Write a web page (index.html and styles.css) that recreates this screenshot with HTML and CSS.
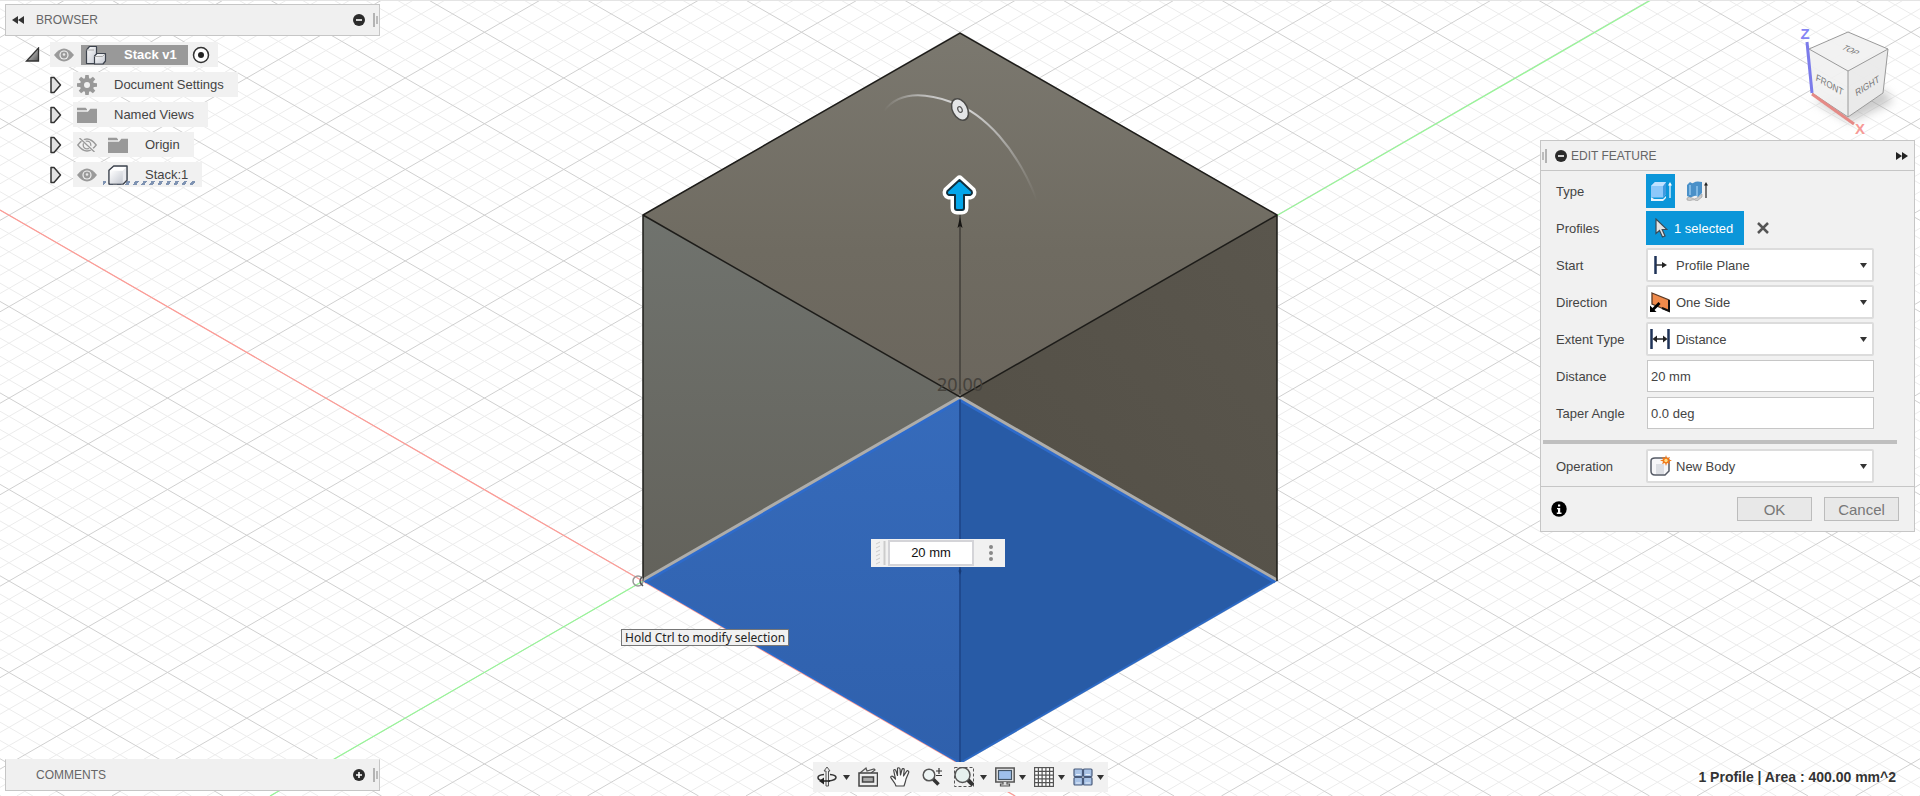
FILE: index.html
```html
<!DOCTYPE html>
<html lang="en">
<head>
<meta charset="utf-8">
<title>Stack v1</title>
<link rel="stylesheet" href="styles.css">
</head>
<body>
<svg class="defs" aria-hidden="true">
  <defs>
    <linearGradient id="metal" x1="0" y1="0" x2="1" y2="1"><stop offset="0" stop-color="#fff"/><stop offset="1" stop-color="#c3c7d0"/></linearGradient>
    <linearGradient id="dark" x1="0" y1="0" x2="1" y2="1"><stop offset="0" stop-color="#eee"/><stop offset="1" stop-color="#555"/></linearGradient>
    <symbol id="i-eye" viewBox="0 0 20 14"><path d="M0 7Q10-6 20 7Q10 20 0 7Z" fill="#9a9a9a"/><circle cx="10" cy="7" r="4.6" fill="#f1f1f1"/><circle cx="10" cy="7" r="3.4" fill="#9a9a9a"/><circle cx="10" cy="6.500" r="1.300" fill="#e8e8e8"/></symbol>
    <symbol id="i-eyeoff" viewBox="0 0 20 14"><path d="M.8 7Q10-5 19.200 7Q10 19 .8 7Z" fill="none" stroke="#999" stroke-width="1.300"/><circle cx="10" cy="7" r="3.800" fill="none" stroke="#999" stroke-width="1.300"/><path d="M3 0L18 14" stroke="#f1f1f1" stroke-width="3"/><path d="M2.500 0L17.500 14" stroke="#999" stroke-width="1.300"/></symbol>
    <symbol id="i-folder" viewBox="0 0 21 17"><path d="M0 1H9L10.500 2.500V3.500H0Z" fill="#999"/><path d="M0 5H11.500L14 2H21V17H0Z" fill="#999"/></symbol>
    <symbol id="i-open" viewBox="0 0 12 18"><path d="M1.500 1.500H4.500L11 9L4.500 16.500H1.500Z" fill="#e2e2e2" stroke="#333" stroke-width="1.500" stroke-linejoin="round"/></symbol>
    <symbol id="i-caret" viewBox="0 0 7 5"><path d="M0 0H7L3.500 5Z" fill="#333"/></symbol>
    <symbol id="i-grip" viewBox="0 0 5 14"><path d="M1 0V14" stroke="#777" stroke-width="1"/><path d="M4 3V11" stroke="#888" stroke-width="1"/></symbol>
  </defs>
</svg>

<main class="app">
  <svg class="scene" viewBox="0 0 1920 796" preserveAspectRatio="xMidYMid slice" aria-label="Model view">
    <defs>
      <linearGradient id="topface" x1="0" y1="0" x2="0" y2="1"><stop offset="0" stop-color="#7b786f"/><stop offset=".6" stop-color="#6f6b61"/><stop offset="1" stop-color="#6b665d"/></linearGradient>
      <linearGradient id="leftface" x1="0" y1="0" x2="0" y2="1"><stop offset="0" stop-color="#70736e"/><stop offset="1" stop-color="#63625b"/></linearGradient>
      <linearGradient id="rightface" x1="1" y1="0" x2="0" y2="1"><stop offset="0" stop-color="#5a564d"/><stop offset="1" stop-color="#534f46"/></linearGradient>
      <linearGradient id="blueleft" x1="0" y1="0" x2="0" y2="1"><stop offset="0" stop-color="#366bbb"/><stop offset="1" stop-color="#2f60ac"/></linearGradient>
      <linearGradient id="arc" gradientUnits="userSpaceOnUse" x1="884" y1="0" x2="1037" y2="0"><stop offset="0" stop-color="#ccc" stop-opacity="0"/><stop offset=".25" stop-color="#ccc" stop-opacity=".8"/><stop offset=".5" stop-color="#ddd"/><stop offset=".75" stop-color="#ccc" stop-opacity=".7"/><stop offset="1" stop-color="#ccc" stop-opacity="0"/></linearGradient>
    </defs>
    <path id="minor" fill="none" stroke="#ececec"/>
    <path id="major" fill="none" stroke="#d0d0d0"/>
    <path d="M0 210L1015 796" stroke="#ff9a94" stroke-width="1.200"/>
    <path d="M270 796L1651 0" stroke="#96f796" stroke-width="1.200"/>
    <path d="M960 33L1277 215L960 397L643 215Z" fill="url(#topface)"/>
    <path d="M643 215L960 397L643 581Z" fill="url(#leftface)"/>
    <path d="M1277 215L960 397L1277 581Z" fill="url(#rightface)"/>
    <path d="M960 397L643 580L960 763Z" fill="url(#blueleft)"/>
    <path d="M960 397L1277 580L960 763Z" fill="#285ba6"/>
    <path d="M643 580L960 763L1277 580" fill="none" stroke="#2c69c4" stroke-width="2"/>
    <path d="M645 582L960 400L1275 582" fill="none" stroke="#2e6bcb" stroke-width="3"/>
    <path d="M643 580L960 397L1277 580" fill="none" stroke="#aeadaa" stroke-width="3"/>
    <path d="M643 581V215L960 33L1277 215V581M643 215L960 397L1277 215" fill="none" stroke="#1d1c19" stroke-width="1.500"/>
    <path d="M960 400V763" stroke="#1f488c" stroke-width="1.800"/>
    <path d="M960 215V394" stroke="#45423c" stroke-width="1.600"/>
    <path d="M960 217L962.500 228L960 226L957.500 228Z" fill="#171614"/>
    <path d="M960 568L961.500 571L960 575L958.500 571Z" fill="#173a75"/>
    <text class="dimension" x="960" y="391">20.00</text>
    <path d="M884 111C896 95 917 90 951 102C985 113 1017 149 1037 200" fill="none" stroke="url(#arc)" stroke-width="2"/>
    <g transform="rotate(-27 960 109.500)"><ellipse cx="960" cy="109.500" rx="7.500" ry="11.500" fill="#e4e5e6" stroke="#4b4a47" stroke-width="1.500"/><ellipse cx="960" cy="109.500" rx="2" ry="3" fill="none" stroke="#555" stroke-width="1.200"/></g>
    <path d="M959.500 180L971.500 191Q973 194 970 195H964V208Q964 210 962 210H957Q955 210 955 208V195H949Q946 194 947.500 191Z" fill="#fff" stroke="#fff" stroke-width="9" stroke-linejoin="round"/>
    <path d="M959.500 180L971.500 191Q973 194 970 195H964V208Q964 210 962 210H957Q955 210 955 208V195H949Q946 194 947.500 191Z" fill="#04a6ea" stroke="#12303f" stroke-width="2" stroke-linejoin="round"/>
    <ellipse cx="638" cy="581" rx="5" ry="5" fill="none" stroke="#999" stroke-width="1.500"/>
    <path d="M643 576Q637 581 643 586" fill="none" stroke="#555" stroke-width="1.500"/>
  </svg>

  <div class="value-box">
    <svg class="value-grip" viewBox="0 0 12 26" aria-hidden="true"><path d="M2 4l4-2M2 8l4-2M2 12l4-2M2 16l4-2M2 20l4-2M2 24l4-2" stroke="#ccc"/><path d="M10.500 1V25" stroke="#ccc" stroke-width="2"/></svg>
    <input class="value-input" type="text" value="20 mm" aria-label="Extrude distance">
    <button class="plain more" aria-label="More options"><svg viewBox="0 0 4 18"><circle cx="2" cy="3" r="2" fill="#888"/><circle cx="2" cy="9" r="2" fill="#888"/><circle cx="2" cy="15" r="2" fill="#888"/></svg></button>
  </div>
  <div class="tooltip" role="tooltip">Hold Ctrl to modify selection</div>

  <aside class="side">
    <header class="bar">
      <button class="plain" aria-label="Collapse browser"><svg class="s-ff" viewBox="0 0 12 8"><path d="M6 0V8L0 4ZM12 0V8L6 4Z" fill="#333"/></svg></button>
      <h2 class="title">BROWSER</h2>
      <button class="plain push" aria-label="Minimize browser"><svg class="s-dot" viewBox="0 0 12 12"><circle cx="6" cy="6" r="6" fill="#2b2b2b"/><path d="M3 6H9" stroke="#fff" stroke-width="1.600"/></svg></button>
      <svg class="s-grip" aria-hidden="true"><use href="#i-grip"/></svg>
    </header>
    <ul class="tree">
      <li class="node root">
        <button class="plain twist" aria-label="Collapse Stack v1"><svg class="s-root" viewBox="0 0 14 15"><path d="M13 1V14H1Z" fill="url(#dark)" stroke="#333" stroke-width="1.300"/></svg></button>
        <div class="chip">
          <svg class="s-eye"><use href="#i-eye"/></svg>
          <span class="active"><svg class="s-asm" viewBox="0 0 22 20"><g stroke="#3d434d" stroke-width="1.200" stroke-linejoin="round"><path d="M1.500 5L4.500 1.500H11.500V16L9.500 18.500H1.500Z" fill="url(#metal)"/><path d="M9.500 11L12 8.500H20.500V16L18 19H9.500Z" fill="url(#metal)"/></g><path d="M1.500 5H9M9.500 11.500H17.500L20 9" fill="none" stroke="#aaa"/></svg>Stack v1</span>
          <svg class="s-target" viewBox="0 0 18 18"><circle cx="9" cy="9" r="7.500" fill="#fff" stroke="#333" stroke-width="1.500"/><circle cx="9" cy="9" r="3" fill="#222"/></svg>
        </div>
      </li>
      <li class="node">
        <button class="plain twist" aria-label="Expand Document Settings"><svg class="s-open"><use href="#i-open"/></svg></button>
        <div class="chip"><svg class="s-icon" viewBox="0 0 20 20"><g fill="#999"><circle cx="10" cy="10" r="7"/><path id="t" d="M8.300 0H11.700L12.300 5H7.700Z"/><use href="#t" transform="rotate(45 10 10)"/><use href="#t" transform="rotate(90 10 10)"/><use href="#t" transform="rotate(135 10 10)"/><use href="#t" transform="rotate(180 10 10)"/><use href="#t" transform="rotate(225 10 10)"/><use href="#t" transform="rotate(270 10 10)"/><use href="#t" transform="rotate(315 10 10)"/></g><circle cx="10" cy="10" r="3" fill="#f1f1f1"/></svg><span>Document Settings</span></div>
      </li>
      <li class="node">
        <button class="plain twist" aria-label="Expand Named Views"><svg class="s-open"><use href="#i-open"/></svg></button>
        <div class="chip"><svg class="s-icon"><use href="#i-folder"/></svg><span>Named Views</span></div>
      </li>
      <li class="node">
        <button class="plain twist" aria-label="Expand Origin"><svg class="s-open"><use href="#i-open"/></svg></button>
        <div class="chip"><svg class="s-eye"><use href="#i-eyeoff"/></svg><svg class="s-icon"><use href="#i-folder"/></svg><span>Origin</span></div>
      </li>
      <li class="node">
        <button class="plain twist" aria-label="Expand Stack:1"><svg class="s-open"><use href="#i-open"/></svg></button>
        <div class="chip hatched"><svg class="s-eye"><use href="#i-eye"/></svg><svg class="s-icon" viewBox="0 0 21 21"><path d="M1 5.500L6 1H20V16L16 20H1Z" fill="#e9eaee" stroke="#3d434d" stroke-width="1.500" stroke-linejoin="round"/><path d="M15.500 6V19.500H2V6Z" fill="url(#metal)"/><path d="M2 6L6.500 2H19L15.500 6Z" fill="#fff"/></svg><span>Stack:1</span></div>
      </li>
    </ul>
    <section class="bar comments">
      <h2 class="title">COMMENTS</h2>
      <button class="plain push" aria-label="Add comment"><svg class="s-dot" viewBox="0 0 12 12"><circle cx="6" cy="6" r="6" fill="#2b2b2b"/><path d="M3 6H9M6 3V9" stroke="#fff" stroke-width="1.600"/></svg></button>
      <svg class="s-grip" aria-hidden="true"><use href="#i-grip"/></svg>
    </section>
  </aside>

  <nav class="tools" aria-label="Navigation">
    <button class="plain tool wide" aria-label="Orbit"><svg class="s-tool" viewBox="0 0 20 20"><path d="M7 7.500Q1 8 1 10.500T5 13.500M13 7.500Q19 8 19 10.500T12 14" fill="none" stroke="#333" stroke-width="1.500"/><path d="M9 19V4H7L10 0L13 4H11.500V19Z" fill="#eee" stroke="#555"/><path d="M13 14H5" stroke="#222" stroke-width="1.500"/><path d="M2 14L7 10.500V17.500Z" fill="#222"/></svg><svg class="s-caret"><use href="#i-caret"/></svg></button>
    <button class="plain tool" aria-label="Look at"><svg class="s-tool" viewBox="0 0 20 20"><path d="M2 6L8 1L9 4L16 2L17 3L13 6" fill="#eee" stroke="#555" stroke-width="1.200"/><rect x="1" y="6" width="18.500" height="13" fill="#eee" stroke="#444" stroke-width="1.500"/><rect x="4.500" y="10" width="11" height="5" fill="#aaa" stroke="#444" stroke-width="1.500"/></svg></button>
    <button class="plain tool" aria-label="Pan"><svg class="s-tool" viewBox="0 0 20 20"><path d="M6 19C5 15 2 13 .8 10.500C.5 9 2.200 8.800 3.500 10L5.500 12L3.800 4C3.500 2 5.500 2 6 4L7.500 8.500V2C7.500.3 9.700.3 10 2L10.500 8L12 2.500C12.500 1 14.500 1.500 14.200 3.200L13.500 9L16.500 4.500C17.500 3 19.500 4 18.500 6L16 12C15.500 15 15 16 14 19Z" fill="#fafafa" stroke="#444" stroke-width="1.200" stroke-linejoin="round"/></svg></button>
    <button class="plain tool" aria-label="Zoom"><svg class="s-tool" viewBox="0 0 20 20"><path d="M11 12L16.500 17.500" stroke="#333" stroke-width="3.500"/><circle cx="7" cy="8" r="5.800" fill="#eef5f5" stroke="#555" stroke-width="1.500"/><path d="M14 4H20M17 1V7M14 8.500H20" stroke="#333" stroke-width="1.200"/></svg></button>
    <button class="plain tool wide" aria-label="Fit"><svg class="s-tool" viewBox="0 0 20 20"><path d="M.5.500H19.500V19.500H.5Z" fill="none" stroke="#555" stroke-dasharray="3 2"/><path d="M14 13L19 18" stroke="#333" stroke-width="4"/><circle cx="8.500" cy="8" r="7.500" fill="#e6f0ee" stroke="#555" stroke-width="1.500"/></svg><svg class="s-caret"><use href="#i-caret"/></svg></button>
    <button class="plain tool snug" aria-label="Display settings"><svg class="s-tool" viewBox="0 0 20 20"><rect x=".8" y="1" width="18.400" height="14" fill="#e8e8e8" stroke="#555" stroke-width="1.500"/><rect x="3.500" y="3.500" width="13" height="9" fill="#9fc0ec" stroke="#456" stroke-width="1.200"/><path d="M8 15V17H5.500V19H14.500V17H12V15" fill="#ddd" stroke="#555" stroke-width="1.200"/></svg><svg class="s-caret"><use href="#i-caret"/></svg></button>
    <button class="plain tool snug" aria-label="Grid and snaps"><svg class="s-tool" viewBox="0 0 20 20"><rect x=".6" y=".6" width="18.800" height="18.800" fill="#fff" stroke="#555" stroke-width="1.200"/><path d="M4.400 0V20M8.100 0V20M11.900 0V20M15.600 0V20M0 4.400H20M0 8.100H20M0 11.900H20M0 15.600H20" stroke="#555" stroke-width="1.200"/></svg><svg class="s-caret"><use href="#i-caret"/></svg></button>
    <button class="plain tool snug" aria-label="Viewports"><svg class="s-tool" viewBox="0 0 20 20"><g fill="#a9c3e6" stroke="#4a5c7c" stroke-width="1.200"><rect x="1" y="2" width="8.500" height="7.500" rx="1"/><rect x="10.500" y="2" width="8.500" height="7.500" rx="1"/><rect x="1" y="10.500" width="8.500" height="7.500" rx="1"/><rect x="10.500" y="10.500" width="8.500" height="7.500" rx="1"/></g><path d="M3 7.500H7.500M12.500 7.500H17M3 16H7.500M12.500 16H17" stroke="#e6effb"/></svg><svg class="s-caret"><use href="#i-caret"/></svg></button>
  </nav>

  <aside class="inspector">
    <svg class="viewcube" viewBox="0 0 130 136" aria-label="View cube">
      <defs><filter id="soft" x="-30%" y="-30%" width="160%" height="160%"><feGaussianBlur stdDeviation="5"/></filter></defs>
      <path d="M28 96L65 118L108 98L100 86Z" fill="#999" opacity=".5" filter="url(#soft)"/>
      <path d="M63 28L24 45L27 89L63 113L98 89L103 45Z" fill="#f1f1f1" fill-opacity=".93"/>
      <path d="M63 67L103 45L98 89L63 113Z" fill="#e9e9e9" fill-opacity=".8"/>
      <path d="M63 28L24 45L63 67L103 45ZM63 67V113L98 89L103 45M63 113L27 89" fill="none" stroke="#9a9a9a"/>
      <path d="M22 38L27 89" stroke="#7b7bea" stroke-width="3"/>
      <path d="M27 90L69 120" stroke="#e58a86" stroke-width="3"/>
      <text class="axis" x="20" y="35" fill="#8585f4">Z</text>
      <text class="axis" x="75" y="130" fill="#f79a96">X</text>
      <text class="face" transform="translate(44 84) rotate(30) skewX(20)">FRONT</text>
      <text class="face" transform="translate(83 85) rotate(-32) skewX(-20)">RIGHT</text>
      <text class="face small" transform="translate(63 48) rotate(25) skewX(-30)">TOP</text>
    </svg>
    <form class="panel">
      <header class="panel-head">
        <svg class="s-grip flip" aria-hidden="true"><use href="#i-grip"/></svg>
        <button type="button" class="plain" aria-label="Minimize"><svg class="s-dot" viewBox="0 0 12 12"><circle cx="6" cy="6" r="6" fill="#2b2b2b"/><path d="M3 6H9" stroke="#fff" stroke-width="1.600"/></svg></button>
        <h2 class="title">EDIT FEATURE</h2>
        <button type="button" class="plain push" aria-label="Dock"><svg class="s-ff" viewBox="0 0 12 8"><path d="M0 0V8L6 4ZM6 0V8L12 4Z" fill="#222"/></svg></button>
      </header>
      <div class="fields">
        <span class="label">Type</span>
        <div class="line">
          <button type="button" class="type on" aria-label="Extrude"><svg class="s-type" viewBox="0 0 22 20"><path d="M1 16L4 18H13L16 15V17L13 20H1Z" fill="#e8f4fd"/><path d="M1 5L5 1H16V13L13 16.500H1Z" fill="#8cc8fa"/><path d="M13 5L16 1V13L13 16.500Z" fill="#3e9ae0"/><path d="M1 5L5 1H16L13 5Z" fill="#c0e2ff"/><path d="M20 17V4" stroke="#eaf6ff" stroke-width="1.300"/><path d="M18 4.500L20 1L22 4.500Z" fill="#fff"/></svg></button>
          <button type="button" class="type" aria-label="Thin extrude"><svg class="s-type" viewBox="0 0 22 20"><path d="M1 17Q4 15 6 17T11 17L16 13V16L11 20Q8 18 6 19T1 19Z" fill="#ccc" stroke="#999" stroke-width=".6"/><path d="M1 4L4 1Q6 3 8 1.500T16 1V12L12 16Q10 14 7 15.500T1 15Z" fill="#4a90c8"/><path d="M4 4V14M11 5V15" stroke="#7fb8e4" stroke-width="2"/><path d="M20 17V4" stroke="#333" stroke-width="1.300"/><path d="M18 4.500L20 1L22 4.500Z" fill="#222"/></svg></button>
        </div>
        <span class="label">Profiles</span>
        <div class="line">
          <button type="button" class="selected"><svg class="s-cursor" viewBox="0 0 13 20"><path d="M1 1V15.500L4.500 12.500L7.500 19L10 18L7.200 11.500H12Z" fill="#e3e3e3" stroke="#3b4a55" stroke-width="1.200"/></svg>1 selected</button>
          <button type="button" class="plain clear" aria-label="Clear selection"><svg class="s-x" viewBox="0 0 12 12"><path d="M1 1L11 11M11 1L1 11" stroke="#555" stroke-width="2.500"/></svg></button>
        </div>
        <label class="label" for="start">Start</label>
        <div class="combo"><select id="start"><option>Profile Plane</option></select><svg class="s-field" viewBox="0 0 20 20"><path d="M5.500 1V19" stroke="#1f3358" stroke-width="2.500"/><path d="M6 10H14" stroke="#333" stroke-width="1.500"/><path d="M12 7L17 10L12 13Z" fill="#222"/></svg><svg class="s-caret"><use href="#i-caret"/></svg></div>
        <label class="label" for="direction">Direction</label>
        <div class="combo"><select id="direction"><option>One Side</option></select><svg class="s-field" viewBox="0 0 20 20"><path d="M2 1L19 8V19L2 12Z" fill="#f08a4b" stroke="#5b3a26" stroke-width="1.300"/><path d="M19 8V19L12 16" fill="none" stroke="#111" stroke-width="2"/><path d="M9.500 11L3 17.500" stroke="#000" stroke-width="2.800"/><path d="M0 20V13.500L6.500 20Z" fill="#000"/></svg><svg class="s-caret"><use href="#i-caret"/></svg></div>
        <label class="label" for="extent">Extent Type</label>
        <div class="combo"><select id="extent"><option>Distance</option></select><svg class="s-field" viewBox="0 0 20 20"><path d="M1.500 0V20M18.500 0V20" stroke="#1f3358" stroke-width="2.500"/><path d="M4 10H16" stroke="#222" stroke-width="1.500"/><path d="M2.500 10L7 6.500V13.500ZM17.500 10L13 6.500V13.500Z" fill="#222"/></svg><svg class="s-caret"><use href="#i-caret"/></svg></div>
        <label class="label" for="distance">Distance</label>
        <input class="text" id="distance" type="text" value="20 mm">
        <label class="label" for="taper">Taper Angle</label>
        <input class="text" id="taper" type="text" value="0.0 deg">
      </div>
      <hr class="rule">
      <div class="fields last">
        <label class="label" for="operation">Operation</label>
        <div class="combo"><select id="operation"><option>New Body</option></select><svg class="s-field" viewBox="0 0 20 20"><path d="M1 5Q1 2 5 2H15Q19 2 19 5V15L15 19H5Q1 19 1 15Z" fill="#f6f6f8" stroke="#565b66" stroke-width="1.500"/><path d="M6 8H14V18H6Z" fill="#dcdee3"/><path d="M16 -1L17 2L20 1L18.800 3.500L22 4.500L18.800 5.500L20 8L17 7L16 10L15 7L12 8L13.200 5.500L10 4.500L13.200 3.500L12 1L15 2Z" fill="#f07818"/><circle cx="16" cy="4.500" r="1.700" fill="#ffe08a"/></svg><svg class="s-caret"><use href="#i-caret"/></svg></div>
      </div>
      <footer class="panel-foot">
        <button type="button" class="plain" aria-label="Information"><svg class="s-info" viewBox="0 0 16 16"><circle cx="8" cy="8" r="7.700" fill="#000"/><path d="M6 7H9.200V11.500H10.500V13H5.800V11.500H7V8.300H6ZM7 3.500H9.200V5.500H7Z" fill="#fff"/></svg></button>
        <button type="button" class="btn push">OK</button>
        <button type="button" class="btn">Cancel</button>
      </footer>
    </form>
    <p class="status">1 Profile | Area : 400.00 mm^2</p>
  </aside>
</main>
<script src="grid.js"></script>
</body>
</html>
```
FILE: styles.css
```css
* { box-sizing: border-box; }

body {
  margin: 0;
  font-family: "Liberation Sans", Arial, sans-serif;
  font-size: 13px;
  color: #444;
  background: #fff;
}

svg { display: block; flex: none; }
h2, p, ul { margin: 0; padding: 0; }
button, input, select { font: inherit; color: inherit; }

.defs { position: absolute; width: 0; height: 0; }

.app {
  position: relative;
  display: grid;
  grid-template-columns: 375px 1fr 375px;
  min-height: 100vh;
  padding: 3px 5px 5px;
  overflow: hidden;
  border-top: 1px solid #e4e4e4;
}

.scene {
  position: absolute;
  top: -1px;
  left: 0;
  width: 100%;
  height: calc(100% + 1px);
}

.dimension {
  font-family: "Noto Sans", sans-serif;
  font-size: 18px;
  text-anchor: middle;
  fill: #45423c;
}

.plain {
  display: flex;
  align-items: center;
  justify-content: center;
  padding: 0;
  border: 0;
  background: none;
}

.push { margin-left: auto; }

/* floating value box and tooltip over the model */
.value-box {
  position: absolute;
  left: calc(50% - 89px);
  top: calc(50% + 140px);
  display: flex;
  align-items: center;
  gap: 2px;
  width: 134px;
  height: 28px;
  padding-left: 3px;
  background: #f1f1f1;
}

.value-grip { width: 12px; height: 26px; }

.value-input {
  width: 86px;
  height: 26px;
  padding: 0;
  border: 2px solid #d4d4d8;
  background: #fff;
  color: #111;
  text-align: center;
}

.more { flex: 1; }
.more svg { width: 4px; height: 18px; }

.tooltip {
  position: absolute;
  left: calc(50% - 339px);
  top: calc(50% + 230px);
  padding: 0 3px;
  border: 1px solid #767676;
  background: #f1f1f1;
  color: #222;
  font-family: "Noto Sans", sans-serif;
  font-size: 12px;
  line-height: 15px;
}

/* browser column */
.side {
  position: relative;
  display: flex;
  flex-direction: column;
}

.bar {
  display: flex;
  align-items: center;
  height: 32px;
  padding: 0 1px 0 6px;
  border: 1px solid #c6c6c6;
  background: #f0f0f0;
}

.comments {
  margin-top: auto;
  padding-left: 30px;
  border-top-color: #f0f0f0;
}

.title {
  font-size: 12px;
  font-weight: normal;
  line-height: 16px;
  color: #666;
}

.bar .plain + .title { margin-left: 12px; }
.s-ff { width: 12px; height: 8px; }
.s-dot { width: 12px; height: 12px; }
.s-grip { width: 5px; height: 14px; }
.bar .s-grip { margin-left: 8px; }
.flip { transform: rotate(180deg); }

.tree {
  display: flex;
  flex-direction: column;
  gap: 5px;
  margin-top: 6px;
  list-style: none;
}

.node { display: flex; align-items: center; padding-left: 44px; }
.root { padding-left: 20px; }
.twist { width: 24px; justify-content: flex-start; }
.s-open { width: 13px; height: 18px; }
.s-root { width: 15px; height: 15px; }

.chip {
  display: flex;
  align-items: center;
  height: 25px;
  padding: 0 14px 0 4px;
  background: #f1f1f1;
}

.root .chip { padding-right: 8px; margin-left: 1px; }
.s-eye { width: 20px; height: 14px; }
.s-icon { width: 20px; height: 20px; }
.chip > span { margin-left: 17px; }
.s-eye + .s-icon { margin-left: 11px; }

.chip > .active {
  display: flex;
  align-items: center;
  gap: 17px;
  height: 20px;
  margin-left: 7px;
  padding: 0 11px 0 4px;
  background: #999;
  color: #fff;
  font-weight: bold;
}

.s-asm { width: 22px; height: 20px; }
.s-target { width: 18px; height: 18px; margin-left: 4px; }

.hatched {
  background: repeating-linear-gradient(120deg, #7f93b2 0 3px, #f1f1f1 3px 7px) 30px 19px / 95px 4px no-repeat, #f1f1f1;
}

/* bottom navigation bar */
.tools {
  position: relative;
  align-self: end;
  justify-self: center;
  display: flex;
  align-items: center;
  gap: 8px;
  height: 30px;
  margin-bottom: -1px;
  padding: 0 4px;
  background: #f1f1f1;
}

.tool { width: 24px; justify-content: flex-start; }
.wide { width: auto; gap: 6px; }
.snug { width: auto; gap: 4px; }
.s-tool { width: 20px; height: 20px; }
.s-caret { width: 7px; height: 5px; }

/* right column */
.inspector {
  position: relative;
  display: flex;
  flex-direction: column;
}

.viewcube {
  width: 130px;
  height: 136px;
  align-self: flex-end;
}

.axis { font-size: 15px; font-weight: bold; text-anchor: middle; }
.face { font-size: 9px; text-anchor: middle; fill: #777; }
.small { font-size: 8px; }

.panel { border: 1px solid #c6c6c6; background: #f1f1f1; }

.panel-head {
  display: flex;
  align-items: center;
  height: 30px;
  padding: 0 6px 0 1px;
  border-bottom: 1px solid #c6c6c6;
}

.panel-head .s-grip + .plain { margin: 0 4px 0 8px; }

.fields {
  display: grid;
  grid-template-columns: 90px 1fr;
  grid-auto-rows: 34px;
  row-gap: 3px;
  align-items: center;
  padding: 3px 40px 0 15px;
}

.last { padding-bottom: 3px; }
.line { display: flex; align-items: center; }

.type {
  display: flex;
  align-items: center;
  justify-content: center;
  width: 29px;
  height: 34px;
  padding: 0;
  border: 0;
  background: none;
}

.type + .type { margin-left: 7px; }
.on { background: #0b96d9; }
.s-type { width: 22px; height: 20px; }

.selected {
  display: flex;
  align-items: center;
  gap: 6px;
  width: 98px;
  height: 34px;
  padding: 0 0 0 9px;
  border: 0;
  background: #0b96d9;
  color: #fff;
  white-space: nowrap;
}

.s-cursor { width: 13px; height: 20px; }
.clear { margin-left: 13px; }
.s-x { width: 12px; height: 12px; }

.combo { display: grid; align-items: center; }
.combo > * { grid-area: 1 / 1; }
.combo svg { pointer-events: none; }
.s-field { width: 20px; height: 20px; margin-left: 4px; overflow: visible; }
.combo .s-caret { justify-self: end; margin-right: 7px; }

.combo select {
  appearance: none;
  height: 34px;
  padding: 0 20px 0 28px;
  border: 2px solid #dcdcdc;
  border-radius: 2px;
  background: #fff;
}

.text {
  min-width: 0;
  height: 32px;
  margin-left: 1px;
  padding: 0 3px;
  border: 1px solid #c6c6c6;
  background: #fff;
}

.rule {
  height: 4px;
  margin: 10px 17px 2px 2px;
  border: 0;
  background: #bfbfbf;
}

.panel-foot {
  display: flex;
  align-items: center;
  gap: 12px;
  height: 45px;
  padding: 0 15px 0 10px;
  border-top: 1px solid #c6c6c6;
}

.s-info { width: 16px; height: 16px; }

.btn {
  width: 75px;
  height: 24px;
  padding: 0;
  border: 1px solid #bcbcbc;
  background: #e8e8e8;
  color: #777;
  font-size: 15px;
}

.status {
  margin: auto 19px 5px auto;
  color: #333;
  font-size: 14px;
  font-weight: bold;
  line-height: 18px;
}
```
FILE: grid.js
```js
// Isometric ground grid: diagonals through the origin, a heavy line every fifth step.
const origin = { x: 643, y: 581 };
const slope = 0.577;
const step = 31.7;
const width = 1920;
const height = 796;

const paths = { minor: "", major: "" };
for (const dir of [1, -1]) {
  const atTop = origin.x - dir * origin.y / slope;
  const run = dir * height / slope;
  for (let k = -100; k <= 100; k++) {
    const x = atTop + k * step;
    if (Math.max(x, x + run) < 0 || Math.min(x, x + run) > width) continue;
    paths[k % 5 === 0 ? "major" : "minor"] += `M${x.toFixed(1)} 0L${(x + run).toFixed(1)} ${height}`;
  }
}
document.getElementById("minor").setAttribute("d", paths.minor);
document.getElementById("major").setAttribute("d", paths.major);
```
